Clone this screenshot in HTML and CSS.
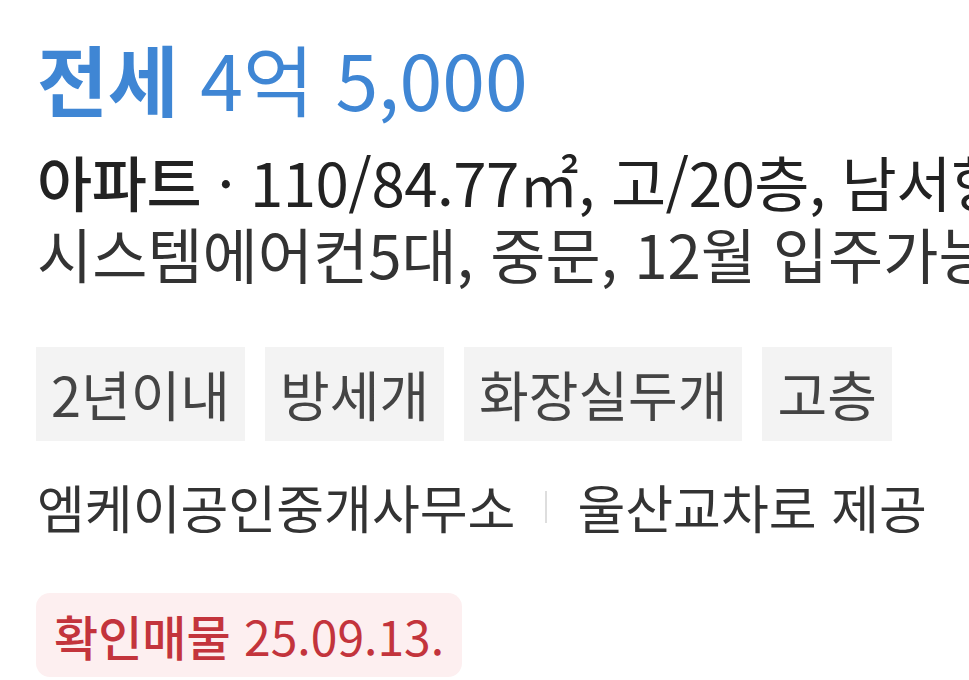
FILE: index.html
```html
<!DOCTYPE html>
<html lang="ko">
<head>
<meta charset="utf-8">
<link rel="stylesheet" href="styles.css">
</head>
<body>
<div class="card">
  <div class="price"><b>전세</b> 4억 5,000</div>
  <div class="line spec"><b>아파트</b> · 110/84.77㎡, 고/20층, 남서향</div>
  <div class="line desc">시스템에어컨5대, 중문, 12월 입주가능</div>
  <div class="tags">
    <span class="tag">2년이내</span>
    <span class="tag">방세개</span>
    <span class="tag">화장실두개</span>
    <span class="tag">고층</span>
  </div>
  <div class="agent"><span>엠케이공인중개사무소</span><span class="bar"></span><span>울산교차로 제공</span></div>
  <div class="confirm"><b>확인매물</b> 25.09.13.</div>
</div>
</body>
</html>
```

FILE: styles.css
```css
html, body {
  margin: 0;
  padding: 0;
  background: #fff;
  overflow: hidden;
}
.card {
  font-family: "Noto Sans CJK KR", "Noto Sans", sans-serif;
  padding: 33px 0 0 37px;
  white-space: nowrap;
  display: flex;
  flex-direction: column;
  align-items: flex-start;
  width: 932px;
  overflow: hidden;
}
.price {
  font-size: 77px;
  line-height: 90px;
  color: #3f86d4;
}
.price b { font-weight: 700; }
.line {
  max-width: 932px;
  overflow: hidden;
  font-size: 60px;
  line-height: 72px;
}
.spec {
  margin-top: 22px;
  color: #222;
  letter-spacing: -0.5px;
}
.spec b { font-weight: 500; }
.desc {
  color: #333;
}
.tags {
  display: flex;
  gap: 20px;
  margin-top: 58px;
  margin-left: -1px;
}
.tag {
  background: #f3f3f3;
  color: #444;
  font-size: 54px;
  line-height: 94px;
  padding: 0 15px;
}
.agent {
  display: flex;
  align-items: center;
  font-size: 52px;
  line-height: 70px;
  color: #333;
  margin-top: 31px;
}
.bar {
  width: 2px;
  height: 32px;
  background: #dedede;
  margin: 0 30px;
}
.confirm {
  margin-top: 51px;
  margin-left: -1px;
  background: #fdeff0;
  color: #c3343c;
  font-size: 48px;
  line-height: 84px;
  padding: 0 18px;
  border-radius: 14px;
}
.confirm b { font-weight: 500; }
```
